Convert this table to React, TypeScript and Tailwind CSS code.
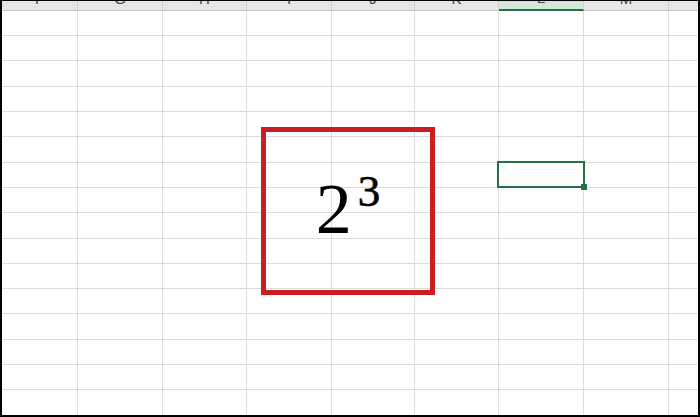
const columns = [
  { label: 'F' },
  { label: 'G' },
  { label: 'H' },
  { label: 'I' },
  { label: 'J' },
  { label: 'K' },
  { label: 'L' },
  { label: 'M' },
  { label: '' },
];

const rowCount = 16;
const selectedCol = 6;
const selectedRow = 6;

export default function App() {
  return (
    <div className="relative w-[700px] h-[417px] bg-white border-t border-l-2 border-r-2 border-b-2 border-black overflow-hidden font-['Liberation_Sans',Arial,sans-serif]">
      <div className="grid grid-cols-[76px_85px_84px_85px_83px_84px_85px_85px_29px] grid-rows-[10px_25px_25px_26px_25px_25px_26px_25px_25px_26px_25px_25px_25px_26px_25px_25px_25px]">
        {columns.map((col, c) => (
          <div
            key={c}
            className={`flex items-end justify-center overflow-hidden pb-[4px] text-[15px] leading-none text-[#444] ${
              c === selectedCol
                ? 'bg-[#d3e8da] border-b-2 border-b-[#217346] text-[#1e5c3a]'
                : 'bg-[#e6e6e6] border-b border-b-[#c4c4c4]'
            } ${c < columns.length - 1 ? 'border-r border-r-[#cfcfcf]' : ''}`}
          >
            {col.label && <span>{col.label}</span>}
          </div>
        ))}

        {Array.from({ length: rowCount }).map((_, r) =>
          columns.map((_col, c) => (
            <div
              key={`${r}-${c}`}
              className={`relative border-[#dcdcdc] ${c < columns.length - 1 ? 'border-r' : ''} ${
                r < rowCount - 1 ? 'border-b' : ''
              }`}
            >
              {r === selectedRow && c === selectedCol && (
                <>
                  <div className="absolute -left-[2px] -top-[2px] w-[88px] h-[27px] border-2 border-[#217346] z-10" />
                  <div className="absolute left-[82px] top-[21px] w-[6px] h-[6px] bg-[#217346] z-10" />
                </>
              )}
            </div>
          ))
        )}
      </div>

      {/* highlighted formula */}
      <div className="absolute left-[259px] top-[126px] w-[174px] h-[168px] border-[5px] border-[#cc1d23] flex items-center justify-center pb-[9px] z-20">
        <div className="flex items-start font-['Liberation_Serif','Times_New_Roman',serif] text-black">
          <span className="text-[72px] leading-none mt-[4px]">2</span>
          <span className="text-[45px] leading-none ml-[6px] [-webkit-text-stroke:0.6px_black]">3</span>
        </div>
      </div>
    </div>
  );
}
